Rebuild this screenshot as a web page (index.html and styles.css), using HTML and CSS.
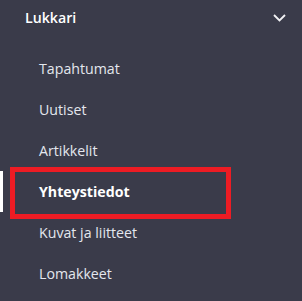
FILE: index.html
```html
<!DOCTYPE html>
<html lang="fi">
<head>
<meta charset="utf-8">
<link rel="stylesheet" href="styles.css">
</head>
<body>
<nav class="menu">
  <div class="menu-head">
    <span class="menu-title">Lukkari</span>
    <svg class="chevron" width="16" height="10" viewBox="0 0 16 10"><polyline points="2,2 7.5,7.5 13,2" fill="none" stroke="#f2f2f5" stroke-width="1.8"/></svg>
  </div>
  <ul class="menu-list">
    <li class="menu-item">Tapahtumat</li>
    <li class="menu-item">Uutiset</li>
    <li class="menu-item">Artikkelit</li>
    <li class="menu-item active">Yhteystiedot</li>
    <li class="menu-item">Kuvat ja liitteet</li>
    <li class="menu-item">Lomakkeet</li>
  </ul>
  <div class="highlight"></div>
</nav>
</body>
</html>
```
FILE: styles.css
```css
html, body {
  margin: 0;
  padding: 0;
  background: #3a3b4a;
}
.menu {
  position: relative;
  width: 302px;
  height: 301px;
  font-family: "Open Sans", "Noto Sans", sans-serif;
  font-size: 14.2px;
  color: #e4e7ee;
  overflow: hidden;
}
.menu-head {
  height: 48px;
  display: flex;
  align-items: flex-start;
  justify-content: space-between;
  padding: 8px 14px 0 25px;
  box-sizing: border-box;
}
.menu-title {
  font-weight: 600;
  color: #ffffff;
  line-height: 20px;
}
.chevron {
  margin-top: 5px;
}
.menu-list {
  list-style: none;
  margin: 0;
  padding: 0;
}
.menu-item {
  height: 41px;
  display: flex;
  align-items: center;
  padding-left: 39px;
  box-sizing: border-box;
}
.menu-item.active {
  font-weight: 700;
  color: #ffffff;
  border-left: 3px solid #ffffff;
  padding-left: 36px;
}
.highlight {
  position: absolute;
  left: 10px;
  top: 167px;
  width: 221px;
  height: 52px;
  border: 5px solid #ed1c24;
  box-sizing: border-box;
}
```
